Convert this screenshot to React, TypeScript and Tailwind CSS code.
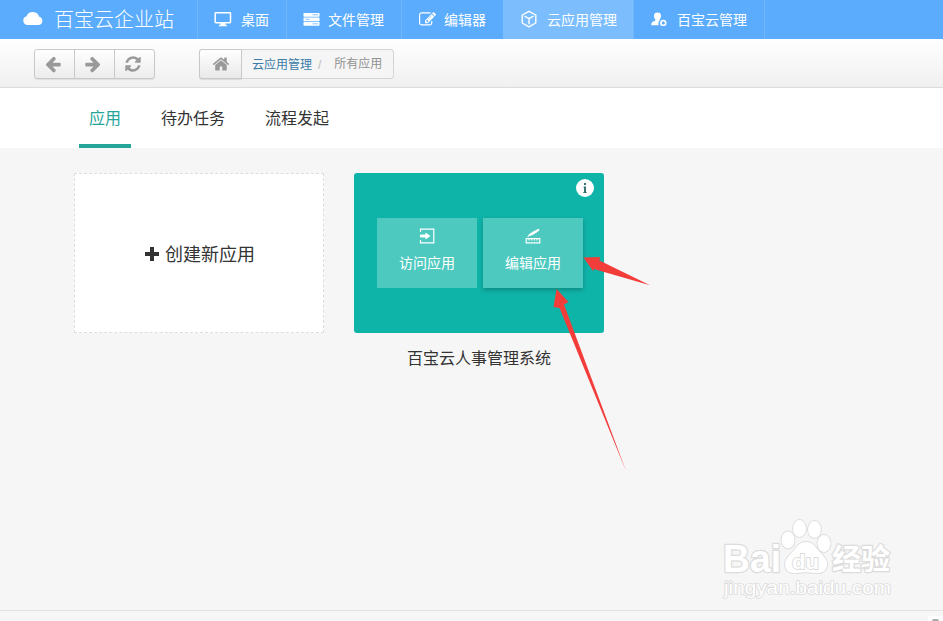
import type { ReactNode } from "react";

const ICONS = {
  left: "M1664 896v128q0 53-32.5 90.5t-84.5 37.5h-704l293 294q38 36 38 90t-38 90l-75 76q-37 37-90 37-52 0-91-37l-651-652q-37-37-37-90 0-52 37-91l651-650q38-38 91-38 52 0 90 38l75 74q38 38 38 91t-38 91l-293 293h704q52 0 84.5 37.5t32.5 90.5z",
  right: "M1600 960q0 54-37 91l-651 651q-39 37-91 37-51 0-90-37l-75-75q-38-38-38-91t38-91l293-293h-704q-52 0-84.5-37.5t-32.5-90.5v-128q0-53 32.5-90.5t84.5-37.5h704l-293-294q-38-36-38-90t38-90l75-75q38-38 90-38 53 0 91 38l651 651q37 35 37 90z",
  refresh: "M1639 1056q0 5-1 7-64 268-268 434.5t-478 166.5q-146 0-282.5-55t-243.5-157l-129 129q-19 19-45 19t-45-19-19-45v-448q0-26 19-45t45-19h448q26 0 45 19t19 45-19 45l-137 137q71 66 161 102t187 36q134 0 250-65t186-179q11-17 53-117 8-23 30-23h192q13 0 22.5 9.5t9.5 22.5zm25-800v448q0 26-19 45t-45 19h-448q-26 0-45-19t-19-45 19-45l138-138q-148-137-349-137-134 0-250 65t-186 179q-11 17-53 117-8 23-30 23h-199q-13 0-22.5-9.5t-9.5-22.5v-7q65-268 270-434.5t480-166.5q146 0 284 55.5t245 156.5l130-129q19-19 45-19t45 19 19 45z",
  home: "M1472 992v480q0 26-19 45t-45 19h-384v-384h-256v384h-384q-26 0-45-19t-19-45v-480q0-1 .5-3t.5-3l575-474 575 474q1 2 1 6zm223-69l-62 74q-8 9-21 11h-3q-13 0-21-7l-692-577-692 577q-12 8-24 7-13-2-21-11l-62-74q-8-10-7-23.5t11-21.5l719-599q32-26 76-26t76 26l244 204v-195q0-14 9-23t23-9h192q14 0 23 9t9 23v408l219 182q10 8 11 21.5t-7 23.5z",
  edit: "M888 1184l116-116-152-152-116 116v56h96v96h56zm440-720q-16-16-33 1l-350 350q-17 17-1 33t33-1l350-350q17-17 1-33zm80 594v190q0 119-84.5 203.5t-203.5 84.5h-832q-119 0-203.5-84.5t-84.5-203.5v-832q0-119 84.5-203.5t203.5-84.5h832q63 0 117 25 15 7 18 23 3 17-9 29l-49 49q-14 14-32 8-23-6-45-6h-832q-66 0-113 47t-47 113v832q0 66 47 113t113 47h832q66 0 113-47t47-113v-126q0-13 9-22l64-64q15-15 35-7t20 29zm-96-738l288 288-672 672h-288v-288zm444 132l-92 92-288-288 92-92q28-28 68-28t68 28l152 152q28 28 28 68t-28 68z",
};

function Icon({ d, className }: { d: string; className: string }) {
  return (
    <svg viewBox="0 0 1792 1792" className={`shrink-0 fill-current ${className}`}>
      <path d={d} />
    </svg>
  );
}

const navItems: { label: string; width: string; gap: string; active?: boolean; icon: ReactNode }[] = [
  {
    label: "桌面",
    width: "w-[89px]",
    gap: "ml-[9px]",
    icon: (
      <svg viewBox="0 0 18 16" className="w-[18px] h-4 -mt-0.5 fill-none stroke-current">
        <rect x="1.2" y="1.7" width="15.3" height="10" rx="0.6" strokeWidth="1.5" />
        <path d="M6.5 12h4.8v1.8h1.5v1.4H5v-1.4h1.5z" className="fill-current stroke-none" />
      </svg>
    ),
  },
  {
    label: "文件管理",
    width: "w-[115px]",
    gap: "ml-[7px]",
    icon: (
      <svg viewBox="0 0 18 16" className="w-[18px] h-4 -mt-0.5">
        <g className="fill-white">
          <rect x="0.5" y="2" width="16" height="3.7" rx="0.6" />
          <rect x="0.5" y="6.5" width="16" height="3.7" rx="0.6" />
          <rect x="0.5" y="11" width="16" height="3.7" rx="0.6" />
        </g>
        <path d="M9.5 3.8h5.500M2.500 8.300h4M9.500 12.800h5.500" className="stroke-[#7bbdfd] fill-none" strokeWidth="0.9" />
      </svg>
    ),
  },
  { label: "编辑器", width: "w-[102px]", gap: "ml-2", icon: <Icon d={ICONS.edit} className="size-[17px]" /> },
  {
    label: "云应用管理",
    width: "w-[130px]",
    gap: "ml-[9px]",
    active: true,
    icon: (
      <svg viewBox="0 0 18 18" className="w-[18px] h-[18px] -mt-0.5 fill-none stroke-current" strokeWidth="1.4" strokeLinejoin="round">
        <path d="M9 1.300 15.800 5v8L9 16.800 2.200 13V5zM4.500 6.200 9 8.700l4.500-2.500M9 8.700v5.600" />
      </svg>
    ),
  },
  {
    label: "百宝云管理",
    width: "w-[131px]",
    gap: "ml-[9px]",
    icon: (
      <svg viewBox="0 0 18 16" className="w-[18px] h-4 -mt-0.5">
        <path d="M7.500 1.500c2.500 0 3.600 1.200 3.500 3.300 0 1.800-.7 3-1.500 4v.8c-.8.8-1.200 1.900-.9 4.600H1.300c0-2.500.4-3.200 2-3.800 1.600-.5 2.200-.8 2.200-1.600C4.500 7.800 4 6.500 4 4.800c0-2.100 1-3.300 3.500-3.300z" className="fill-white" />
        <circle cx="13.3" cy="11.9" r="2.4" className="fill-none stroke-white" strokeWidth="1.6" />
      </svg>
    ),
  },
];

const tabs = [
  { label: "应用", active: true },
  { label: "待办任务" },
  { label: "流程发起" },
];

function TopNav() {
  return (
    <header className="flex h-[39px] bg-[#5bacfd] text-white">
      <div className="flex w-[197px] items-center pl-[22px]">
        <svg viewBox="0 0 22 15" className="w-[22px] h-[15px] mb-[3px] fill-current">
          <path d="M5.500 14A4.500 4.500 0 0 1 4.500 5.200a6.800 6.800 0 0 1 12.700.6A4.200 4.200 0 0 1 16.900 14z" />
        </svg>
        <span className="ml-[10px] text-[20px] leading-[38px] font-light whitespace-nowrap">百宝云企业站</span>
      </div>
      <nav className="flex">
        {navItems.map((item) => (
          <div
            key={item.label}
            className={`flex items-center pl-4 border-l whitespace-nowrap ${item.width} ${
              item.active ? "bg-[#7bbdfd] border-[#7bbdfd]" : "border-[#70b7fd]"
            }`}
          >
            <span className="flex w-[18px] justify-center">{item.icon}</span>
            <span className={`text-sm ${item.gap}`}>{item.label}</span>
          </div>
        ))}
        <div className="w-px bg-[#70b7fd]" />
      </nav>
    </header>
  );
}

function Toolbar() {
  return (
    <div className="flex h-[49px] items-center border-b border-[#dcdcdc] bg-linear-to-b from-white to-[#f0f0f0] pt-[2px] pl-[34px] text-[#999]">
      <div className="flex h-[30px] w-[121px] rounded-[3px] border border-[#c9c9c9] bg-linear-to-b from-white to-[#ececec] shadow-[0_1px_1px_rgba(0,0,0,0.08)]">
        <button className="flex w-10 items-center justify-center border-r border-[#c9c9c9] pr-[3px]">
          <Icon d={ICONS.left} className="w-[18px] h-[18px]" />
        </button>
        <button className="flex w-10 items-center justify-center border-r border-[#c9c9c9] pr-1">
          <Icon d={ICONS.right} className="w-[18px] h-[18px]" />
        </button>
        <button className="flex flex-1 items-center justify-center pr-1">
          <Icon d={ICONS.refresh} className="w-[18px] h-[18px]" />
        </button>
      </div>
      <div className="ml-11 flex h-[30px] w-[195px] items-center rounded-[3px] border border-[#d4d4d4] bg-[#f5f5f5] text-xs whitespace-nowrap">
        <button className="-ml-px flex h-[30px] w-[43px] items-center justify-center rounded-l-[3px] border border-[#c9c9c9] bg-linear-to-b from-white to-[#e9e9e9] shadow-[0_1px_1px_rgba(0,0,0,0.1)]">
          <Icon d={ICONS.home} className="w-[18px] h-[18px]" />
        </button>
        <a className="ml-[10px] pt-px text-[#3a7ca8]">云应用管理</a>
        <span className="ml-[6px] pt-px text-[#bbb]">/</span>
        <span className="ml-[13px] text-[#919191]">所有应用</span>
      </div>
    </div>
  );
}

function Tabs() {
  return (
    <div className="flex h-[60px] gap-5 bg-white pl-[79px] text-base text-[#333]">
      {tabs.map((tab) => (
        <div
          key={tab.label}
          className={`px-[10px] pt-[19px] leading-6 ${tab.active ? "border-b-4 border-[#26a69a] text-[#26a69a]" : ""}`}
        >
          {tab.label}
        </div>
      ))}
    </div>
  );
}

function AppCard() {
  return (
    <div className="w-[250px]">
      <div className="relative h-40 rounded-[3px] bg-[#0fb4a9] pt-[45px] pl-[23px]">
        <div className="absolute top-[6px] right-[10px] flex size-[18px] items-center justify-center rounded-full bg-white">
          <svg viewBox="0 0 6 10" className="h-[10px] w-[6px] fill-[#39736f]">
            <path d="M2 0h2v2H2zM1.500 3.500H4V9h.7v1H1.300V9H2V4.500h-.5z" />
          </svg>
        </div>
        <div className="flex gap-[6px] text-sm text-white">
          <div className="flex h-[70px] w-[100px] shrink-0 flex-col items-center bg-[#4ec9bf] pt-[10px]">
            <svg viewBox="0 0 16 16" className="size-4 fill-none stroke-current" strokeWidth="1.2">
              <path d="M1.500 4V1.200h13.300v13.600H1.500V12" />
              <path d="M1.500 6.500h5V4.500L11.500 8l-5 3.500v-2h-5q-1.500-1.500 0-3z" className="fill-current stroke-none" />
            </svg>
            <span className="mt-[9px] leading-5">访问应用</span>
          </div>
          <div className="flex h-[70px] w-[100px] shrink-0 flex-col items-center bg-[#4ec9bf] pt-[10px] shadow-[0_2px_5px_rgba(0,0,0,0.25)]">
            <svg viewBox="0 0 16 16" className="size-4 fill-none stroke-current" strokeWidth="1.2">
              <path d="M1.200 10.600h13.600v4.300H1.200zM4 11v1.600M6.700 11v1.600M9.400 11v1.600M12 11v1.600" />
              <path d="M2.200 8.800C3 6.500 8 3.500 11 2q2.500-1.300 3.700-.7-.2 1.500-3 3.200C8.500 6.600 5 8.400 2.200 8.800z" className="fill-current stroke-none" />
            </svg>
            <span className="mt-[9px] leading-5">编辑应用</span>
          </div>
        </div>
      </div>
      <p className="mt-[14px] text-center text-base text-[#333]">百宝云人事管理系统</p>
    </div>
  );
}

function Watermark() {
  return (
    <svg viewBox="0 0 180 84" className="absolute top-[515px] left-[718px] h-[84px] w-[180px]" fill="#fff" stroke="#dcdcdc" strokeWidth="1.8" paintOrder="stroke" strokeLinejoin="round">
      <text x="5" y="57" fontSize="38" fontWeight="700" textLength="58" lengthAdjust="spacingAndGlyphs" strokeWidth="2.5">Bai</text>
      <ellipse cx="70" cy="25" rx="6.5" ry="8.5" />
      <ellipse cx="81.5" cy="13.5" rx="6.5" ry="8.5" />
      <ellipse cx="96.5" cy="14.5" rx="6.5" ry="8.5" />
      <ellipse cx="106" cy="28.5" rx="6.5" ry="8.5" />
      <path d="M88 27c6 0 8 3 11 7 4 5 10 9 10 15 0 7-5 10-12 9-6-1-12-1-18 0-7 1-12-2-12-9 0-6 6-10 10-15 3-4 5-7 11-7z" />
      <text x="74" y="54" fontSize="21" fontWeight="700" textLength="27" lengthAdjust="spacingAndGlyphs">du</text>
      <text x="114" y="55" fontSize="29" fontWeight="700" strokeWidth="2.5">经验</text>
      <text x="6" y="79" fontSize="18" textLength="167" lengthAdjust="spacingAndGlyphs" strokeWidth="1.6">jingyan.baidu.com</text>
    </svg>
  );
}

export default function App() {
  return (
    <div className="relative flex h-[621px] w-[943px] flex-col overflow-hidden bg-[#f6f6f6] font-['Liberation_Sans','Noto_Sans_CJK_SC',sans-serif]">
      <TopNav />
      <Toolbar />
      <Tabs />
      <main className="flex flex-1 gap-[30px] pt-[25px] pl-[74px]">
        <div className="flex h-40 w-[250px] items-center justify-center border border-dashed border-[#ddd] bg-white pt-[3px] pl-[2px] text-lg text-[#333]">
          <svg viewBox="0 0 14 14" className="mr-[6px] mb-px size-[14px] fill-current">
            <path d="M5 0h4v5h5v4H9v5H5V9H0V5h5z" />
          </svg>
          创建新应用
        </div>
        <AppCard />
      </main>
      <footer className="flex h-[11px] items-end justify-end border-t border-[#e2e2e2]">
        <div className="flex h-[5px] w-[15px] items-end justify-center bg-white">
          <div className="h-[2px] w-[7px] rounded-t-full bg-[#aaa]" />
        </div>
      </footer>
      <Watermark />
      {/* pointers to the edit button */}
      <svg viewBox="0 0 943 621" className="pointer-events-none absolute inset-0 fill-[#f23d3a]">
        <path d="M583.5 257.500 600 257l-.5 3.500L650 285.300l-54.500-15.800-1-1-1.500 2.500z" />
        <path d="M556.500 289l12 13-4.500 2.500L626 471 559.500 308l-6-1z" />
      </svg>
    </div>
  );
}
